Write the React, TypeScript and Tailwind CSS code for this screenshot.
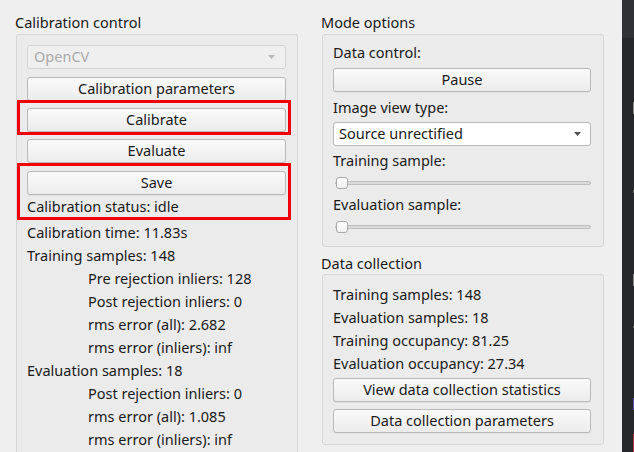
import React from "react";

const Btn = ({ children }: { children: React.ReactNode }) => (
  <div className="h-[24px] flex items-center justify-center rounded-[3px] border border-[#b9b9b9] bg-gradient-to-b from-[#fafafa] to-[#ececec] text-[#1a1a1a] shadow-[0_1px_0_rgba(0,0,0,0.04)]">
    {children}
  </div>
);

const Slider = () => (
  <div className="relative h-[14px] flex items-center">
    <div className="h-[4px] w-full rounded-full border border-[#bdbdbd] bg-[#dadada]" />
    <div className="absolute left-[1px] top-[1px] h-[12px] w-[12px] rounded-[3px] border border-[#a9a9a9] bg-gradient-to-b from-white to-[#efefef]" />
  </div>
);

const Line = ({ children, indent }: { children: React.ReactNode; indent?: boolean }) => (
  <div className={"h-[23px] flex items-center " + (indent ? "pl-[61px]" : "")}>{children}</div>
);

export default function App() {
  return (
    <div
      className="w-[634px] h-[452px] flex overflow-hidden bg-[#efefef] text-[14.5px] text-[#1a1a1a]"
      style={{ fontFamily: '"Noto Sans", "Open Sans", sans-serif' }}
    >
      <div className="w-[622px] flex gap-[23px] pl-[15px] pt-[12px]">
        {/* Left column */}
        <div className="w-[283px] flex flex-col">
          <div className="h-[22px] leading-[20px]">Calibration control</div>
          <div className="ml-[1px] flex-1 rounded-t-[3px] border border-b-0 border-[#d7d7d7] bg-[#ebebeb] pl-[10px] pr-[11px] pt-[10px] flex flex-col">
            <div className="h-[24px] flex items-center justify-between rounded-[3px] border border-[#d4d4d4] bg-[#efefef] px-[6px] text-[#aaaaaa]">
              <span>OpenCV</span>
              <svg width="7" height="4" viewBox="0 0 7 4" className="mr-[4px]"><path d="M0 0h7L3.5 4z" fill="#b8b8b8" /></svg>
            </div>
            <div className="mt-[8px]"><Btn>Calibration parameters</Btn></div>
            <div className="mt-[7px] relative">
              <Btn>Calibrate</Btn>
              <div className="absolute left-[-10px] right-[-5px] top-[-8px] bottom-[-3px] border-[3px] border-[#f00000]" />
            </div>
            <div className="mt-[7px]"><Btn>Evaluate</Btn></div>
            <div className="mt-[8px] relative">
              <Btn>Save</Btn>
              <div className="h-[24px] flex items-center">Calibration status: idle</div>
              <div className="absolute left-[-10px] right-[-5px] top-[-8px] bottom-[-1px] border-[3px] border-[#f00000]" />
            </div>
            <div className="mt-[2px]">
              <Line>Calibration time: 11.83s</Line>
              <Line>Training samples: 148</Line>
              <Line indent>Pre rejection inliers: 128</Line>
              <Line indent>Post rejection inliers: 0</Line>
              <Line indent>rms error (all): 2.682</Line>
              <Line indent>rms error (inliers): inf</Line>
              <Line>Evaluation samples: 18</Line>
              <Line indent>Post rejection inliers: 0</Line>
              <Line indent>rms error (all): 1.085</Line>
              <Line indent>rms error (inliers): inf</Line>
            </div>
          </div>
        </div>

        {/* Right column */}
        <div className="w-[283px] flex flex-col">
          <div className="h-[22px] leading-[20px]">Mode options</div>
          <div className="ml-[1px] h-[213px] rounded-[3px] border border-[#d7d7d7] bg-[#ebebeb] pl-[10px] pr-[12px] pt-[7px] flex flex-col">
            <div className="h-[22px] flex items-center">Data control:</div>
            <div className="mt-[4px]"><Btn>Pause</Btn></div>
            <div className="h-[28px] mt-[2px] flex items-center">Image view type:</div>
            <div className="h-[24px] flex items-center justify-between rounded-[3px] border border-[#b9b9b9] bg-white px-[5px]">
              <span>Source unrectified</span>
              <svg width="7" height="4" viewBox="0 0 7 4" className="mr-[4px]"><path d="M0 0h7L3.5 4z" fill="#505050" /></svg>
            </div>
            <div className="h-[30px] flex items-center">Training sample:</div>
            <div className="pl-[2px]"><Slider /></div>
            <div className="h-[30px] flex items-center">Evaluation sample:</div>
            <div className="pl-[2px]"><Slider /></div>
          </div>
          <div className="h-[27px] pt-[8px] leading-[16px]">Data collection</div>
          <div className="ml-[1px] h-[171px] rounded-[3px] border border-[#d7d7d7] bg-[#ebebeb] pl-[10px] pr-[12px] pt-[8px] flex flex-col">
            <Line>Training samples: 148</Line>
            <Line>Evaluation samples: 18</Line>
            <Line>Training occupancy: 81.25</Line>
            <Line>Evaluation occupancy: 27.34</Line>
            <div className="mt-[3px]"><Btn>View data collection statistics</Btn></div>
            <div className="mt-[7px]"><Btn>Data collection parameters</Btn></div>
          </div>
        </div>
      </div>

      {/* Dark strip on the right */}
      <div className="flex-1 flex flex-col bg-[#26272b]">
        <div className="h-[38px] bg-[#303135]" />
        <div className="flex-1 relative">
          <div className="absolute left-[11px] top-[64px] h-[12px] w-[2px] bg-[#8a8a8a]" />
          <div className="absolute left-[11px] top-[152px] h-[3px] w-[2px] bg-[#6f6f6f]" />
          <div className="absolute left-[11px] top-[236px] h-[12px] w-[2px] bg-[#8a8a8a]" />
          <div className="absolute left-[11px] top-[288px] h-[2px] w-[2px] bg-[#6f6f6f]" />
          <div className="absolute left-[11px] top-[360px] h-[12px] w-[2px] bg-[#5b4bb5]" />
          <div className="absolute left-[11px] top-[396px] h-[18px] w-[2px] bg-[#b3343d]" />
        </div>
      </div>
    </div>
  );
}
